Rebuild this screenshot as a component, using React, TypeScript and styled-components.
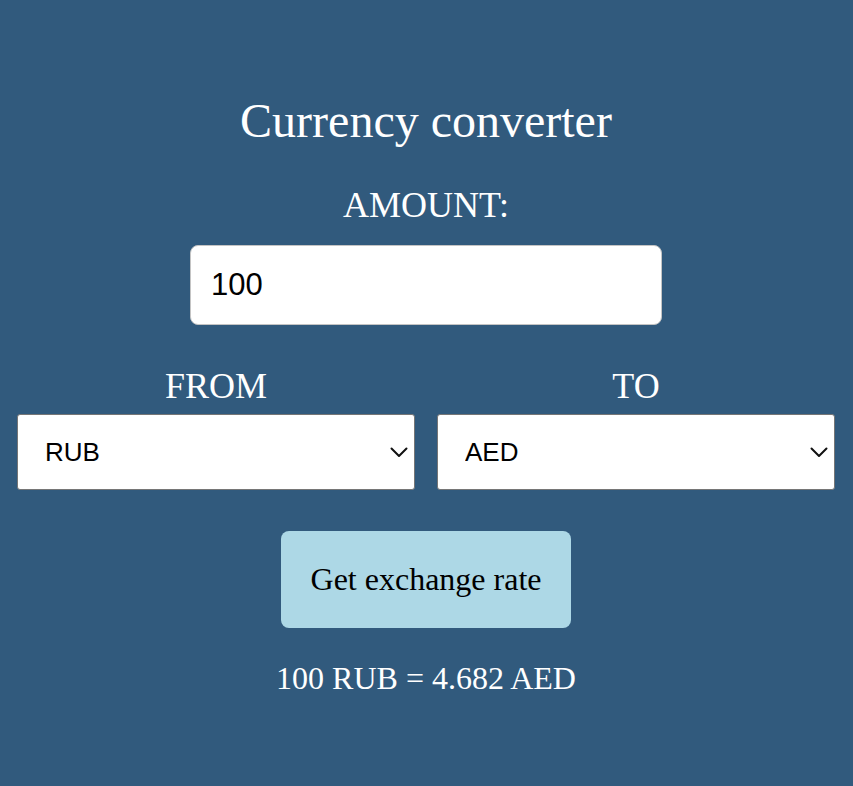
import React, { useState } from "react";
import styled, { createGlobalStyle } from "styled-components";

const Global = createGlobalStyle`
  html, body {
    margin: 0;
    padding: 0;
    background: #315a7d;
  }
  body {
    font-family: "Liberation Serif", "Times New Roman", serif;
  }
`;

const Page = styled.main`
  min-height: 786px;
  box-sizing: border-box;
  padding: 93px 18px 0 17px;
  display: flex;
  flex-direction: column;
  align-items: center;
  color: #ffffff;
`;

const Title = styled.h1`
  margin: 0;
  font-family: "Liberation Serif", "Times New Roman", serif;
  font-weight: normal;
  font-size: 48px;
  line-height: 55px;
`;

const Label = styled.label`
  display: block;
  font-family: "Liberation Serif", "Times New Roman", serif;
  font-size: 36px;
  line-height: 41px;
  text-align: center;
`;

const AmountLabel = styled(Label)`
  margin-top: 37px;
`;

const AmountInput = styled.input`
  margin-top: 19px;
  box-sizing: border-box;
  width: 472px;
  height: 80px;
  padding: 0 20px;
  border: 1px solid #c4c4c4;
  border-radius: 8px;
  background: #ffffff;
  font-family: "Liberation Sans", Arial, sans-serif;
  font-size: 31px;
  color: #000;
  outline: none;
`;

const Row = styled.div`
  margin-top: 41px;
  width: 100%;
  display: grid;
  grid-template-columns: 1fr 1fr;
  column-gap: 22px;
`;

const Column = styled.div`
  display: flex;
  flex-direction: column;
  gap: 7px;
`;

const SelectWrap = styled.div`
  position: relative;
  width: 100%;
  height: 76px;
`;

const Select = styled.select`
  appearance: none;
  -webkit-appearance: none;
  box-sizing: border-box;
  width: 100%;
  height: 100%;
  padding: 0 40px 0 27px;
  border: 1px solid #767676;
  border-radius: 3px;
  background: #ffffff;
  font-family: "Liberation Sans", Arial, sans-serif;
  font-size: 26px;
  color: #000;
  outline: none;
`;

const Chevron = styled.svg`
  position: absolute;
  right: 7px;
  top: 50%;
  width: 18px;
  height: 11px;
  margin-top: -5px;
  pointer-events: none;
`;

const Button = styled.button`
  margin-top: 41px;
  box-sizing: border-box;
  width: 290px;
  height: 97px;
  border: none;
  border-radius: 8px;
  background: #add8e6;
  color: #000;
  font-family: "Liberation Serif", "Times New Roman", serif;
  font-size: 32px;
  cursor: pointer;
`;

const Result = styled.p`
  margin: 32px 0 0;
  font-family: "Liberation Serif", "Times New Roman", serif;
  font-size: 32px;
  line-height: 37px;
`;

const currencies = ["RUB", "AED", "USD", "EUR", "GBP", "CNY", "JPY"];

function CurrencySelect({
  id,
  value,
  onChange,
}: {
  id: string;
  value: string;
  onChange: (v: string) => void;
}) {
  return (
    <SelectWrap>
      <Select id={id} value={value} onChange={(e) => onChange(e.target.value)}>
        {currencies.map((c) => (
          <option key={c} value={c}>
            {c}
          </option>
        ))}
      </Select>
      <Chevron viewBox="0 0 18 11" aria-hidden="true">
        <polyline
          points="1.5,1.5 9,9 16.5,1.5"
          fill="none"
          stroke="#111"
          strokeWidth="2"
          strokeLinecap="round"
          strokeLinejoin="round"
        />
      </Chevron>
    </SelectWrap>
  );
}

export default function App() {
  const [amount, setAmount] = useState("100");
  const [from, setFrom] = useState("RUB");
  const [to, setTo] = useState("AED");

  return (
    <>
      <Global />
      <Page>
        <Title>Currency converter</Title>
        <AmountLabel htmlFor="amount">AMOUNT:</AmountLabel>
        <AmountInput
          id="amount"
          value={amount}
          onChange={(e) => setAmount(e.target.value)}
        />
        <Row>
          <Column>
            <Label htmlFor="from">FROM</Label>
            <CurrencySelect id="from" value={from} onChange={setFrom} />
          </Column>
          <Column>
            <Label htmlFor="to">TO</Label>
            <CurrencySelect id="to" value={to} onChange={setTo} />
          </Column>
        </Row>
        <Button type="button">Get exchange rate</Button>
        <Result>100 RUB = 4.682 AED</Result>
      </Page>
    </>
  );
}
